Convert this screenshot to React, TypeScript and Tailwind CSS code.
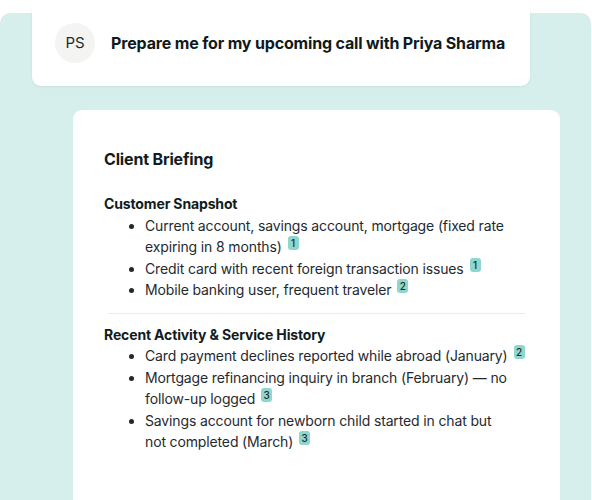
import React from 'react';

type Item = { text: string; cite: number };

const snapshot: Item[] = [
    { text: 'Current account, savings account, mortgage (fixed rate expiring in 8 months)', cite: 1 },
    { text: 'Credit card with recent foreign transaction issues', cite: 1 },
    { text: 'Mobile banking user, frequent traveler', cite: 2 },
];

const history: Item[] = [
    { text: 'Card payment declines reported while abroad (January)', cite: 2 },
    { text: 'Mortgage refinancing inquiry in branch (February) — no follow-up logged', cite: 3 },
    { text: 'Savings account for newborn child started in chat but not completed (March)', cite: 3 },
];

// citation chip; negative right margin so it never forces a line wrap
const Cite: React.FC<{ n: number }> = ({ n }) => (
    <span className="-mr-[17px] ml-[6px] inline-flex h-[14px] w-[11px] items-center justify-center rounded-[3px] bg-[#8fd6cc] text-[10px] font-medium leading-none tracking-normal text-[#1d2b2c] align-[5px]">
        {n}
    </span>
);

const Section: React.FC<{ title: string; items: Item[] }> = ({ title, items }) => (
    <div>
        <h4 className="text-[14px] font-bold leading-[21.5px] tracking-[-0.01em] text-[#111b21]">{title}</h4>
        <ul className="list-disc pl-[41px] pr-[16px] text-[14px] leading-[21.5px] tracking-[-0.01em] text-[#1f2a30]">
            {items.map((item, i) => (
                <li key={i}>
                    {item.text}
                    <Cite n={item.cite} />
                </li>
            ))}
        </ul>
    </div>
);

const App: React.FC = () => {
    return (
        <div className="h-[500px] w-[592px] overflow-hidden bg-white" style={{ fontFamily: 'Inter, "Noto Sans", sans-serif' }}>
            <div className="mt-[13px] h-[520px] w-[591px] rounded-[10px] bg-[#d6efec] pt-px">
                <div className="-mt-[14px] ml-[32px] flex h-[86px] w-[498px] items-center gap-[16px] rounded-[9px] bg-white pl-[23px] shadow-[0_1px_3px_rgba(0,0,0,0.06)]">
                    <div className="flex h-[40px] w-[40px] items-center justify-center rounded-full bg-[#f4f4f2] text-[15px] text-[#1f2a30]">
                        PS
                    </div>
                    <p className="text-[16px] font-bold tracking-[-0.01em] text-[#0f1a20]">Prepare me for my upcoming call with Priya Sharma</p>
                </div>
                <div className="ml-[73px] mt-[24px] h-[420px] w-[487px] rounded-t-[9px] bg-white px-[31px] pt-[37px]">
                    <h3 className="text-[16px] font-bold leading-[24px] tracking-[-0.01em] text-[#111b21]">Client Briefing</h3>
                    <div className="mt-[22px]">
                        <Section title="Customer Snapshot" items={snapshot} />
                    </div>
                    <div className="mx-[4px] mb-[10px] mt-[12px] border-t border-[#ececec]" />
                    <Section title="Recent Activity & Service History" items={history} />
                </div>
            </div>
        </div>
    );
};

export default App;
